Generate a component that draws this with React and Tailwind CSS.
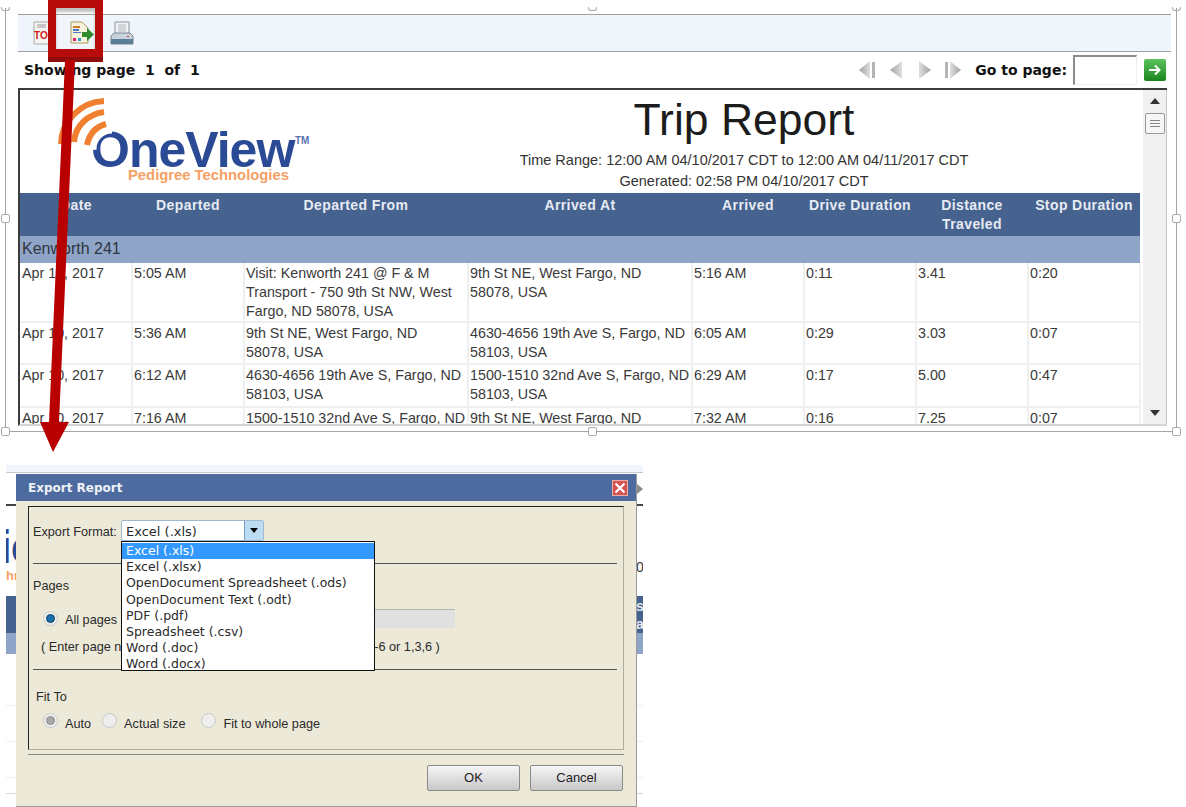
const columns = [
  { label: 'Date', width: 'w-[112px]' },
  { label: 'Departed', width: 'w-[112px]' },
  { label: 'Departed From', width: 'w-[224px]' },
  { label: 'Arrived At', width: 'w-[224px]' },
  { label: 'Arrived', width: 'w-[112px]' },
  { label: 'Drive Duration', width: 'w-[112px]' },
  { label: 'Distance\nTraveled', width: 'w-[112px]' },
  { label: 'Stop Duration', width: 'w-[112px]' },
];

const trips = [
  ['Apr 10, 2017', '5:05 AM', 'Visit: Kenworth 241 @ F & M\nTransport - 750 9th St NW, West\nFargo, ND 58078, USA', '9th St NE, West Fargo, ND\n58078, USA', '5:16 AM', '0:11', '3.41', '0:20'],
  ['Apr 10, 2017', '5:36 AM', '9th St NE, West Fargo, ND\n58078, USA', '4630-4656 19th Ave S, Fargo, ND\n58103, USA', '6:05 AM', '0:29', '3.03', '0:07'],
  ['Apr 10, 2017', '6:12 AM', '4630-4656 19th Ave S, Fargo, ND\n58103, USA', '1500-1510 32nd Ave S, Fargo, ND\n58103, USA', '6:29 AM', '0:17', '5.00', '0:47'],
  ['Apr 10, 2017', '7:16 AM', '1500-1510 32nd Ave S, Fargo, ND', '9th St NE, West Fargo, ND', '7:32 AM', '0:16', '7.25', '0:07'],
];

const formats = [
  'Excel (.xls)',
  'Excel (.xlsx)',
  'OpenDocument Spreadsheet (.ods)',
  'OpenDocument Text (.odt)',
  'PDF (.pdf)',
  'Spreadsheet (.csv)',
  'Word (.doc)',
  'Word (.docx)',
];

const Handle = ({ className }) => (
  <div className={`absolute w-[9px] h-[9px] bg-white border border-[#aaaaaa] rounded-[2px] ${className}`} />
);

// the top handles are cropped by the edge of the picture, only the lower half shows
const TopHandle = ({ className }) => (
  <div className={`absolute w-[9px] h-[4px] border-x border-b border-[#aaaaaa] rounded-b-[3px] ${className}`} />
);

const PdfIcon = () => (
  <svg width="24" height="24" viewBox="0 0 24 24">
    <path d="M1 1h15v22H1z" fill="#f4f4f0" stroke="#a8a8a8" />
    <path d="M4 4h9M4 6h9" stroke="#999" />
    <text x="1" y="18" fontSize="10" fontWeight="bold" fill="#d02020" fontFamily="Liberation Sans">TOO</text>
  </svg>
);

const ExportIcon = () => (
  <svg width="24" height="24" viewBox="0 0 24 24">
    <path d="M1 1h11l6 6v15H1z" fill="#f6f2dc" stroke="#a89a60" />
    <path d="M3 5h7v2H3z" fill="#d07a30" />
    <path d="M3 8h6v2H3zM3 11h8v1H3z" fill="#4a78c8" />
    <path d="M3 17h3v3H3z" fill="#e02080" />
    <path d="M8 17h3v3H8z" fill="#30a0d0" />
    <path d="M12 11h5V7l7 6.500-7 6.500v-4h-5z" fill="#2e8b2e" />
  </svg>
);

const PrinterIcon = () => (
  <svg width="24" height="24" viewBox="0 0 24 24">
    <path d="M5 1h14v13H5z" fill="#f0f2f4" stroke="#8a949e" />
    <path d="M8 4h8M8 6h8M8 8h8M8 10h8" stroke="#b0b8c0" />
    <path d="M1 15l3-3h16l3 3v8H1z" fill="#c8d2dc" stroke="#75858f" />
    <path d="M1 18h22v5H1z" fill="#5b7e98" />
    <path d="M17 15h2v1h-2z" fill="#d03030" />
  </svg>
);

const NavIcon = ({ dir, bar }) => (
  <svg width="20" height="20" viewBox="0 0 20 20" className={dir === 'right' ? '-scale-x-100' : ''}>
    <defs>
      <linearGradient id={`nav-${dir}-${bar}`} x1="0" x2="1" y1="0" y2="0">
        <stop offset="0" stopColor="#a0a0a0" />
        <stop offset="1" stopColor="#e0e0e0" />
      </linearGradient>
    </defs>
    <path d={bar ? 'M2 10l11-9v18z' : 'M3 10l12-9v18z'} fill={`url(#nav-${dir}-${bar})`} />
    {bar && <path d="M15 2h3v16h-3z" fill="#b4b4b4" />}
  </svg>
);

const Radio = ({ kind }) => (
  <span className="flex items-center justify-center w-[15px] h-[15px] rounded-full border border-[#c8c8c8] bg-[#eeeeee] shrink-0">
    {kind === 'blue' && <span className="block w-[9px] h-[9px] rounded-full bg-[#1c6ea8] border border-[#0d3f66]" />}
    {kind === 'gray' && <span className="block w-[9px] h-[9px] rounded-full bg-[#a8a8a8] border border-[#8c8c8c]" />}
  </span>
);

const Logo = () => (
  <div className="relative w-[250px] h-[86px]">
    <span className="absolute left-[33px] top-[22px] text-[50px] leading-[60px] font-bold tracking-[-1px] text-[#2a4a96]">OneView</span>
    <span className="absolute left-[237px] top-[37px] text-[10px] leading-[12px] font-bold text-[#5a76b0]">TM</span>
    <svg className="absolute left-0 top-0" width="60" height="60" viewBox="0 0 60 60">
      <path d="M33 52A21 21 0 0 1 54 30" fill="none" stroke="#ffffff" strokeWidth="11" />
      <path d="M3 46C3 24 22 4 46 3" fill="none" stroke="#f08030" strokeWidth="6" />
      <path d="M16 44C17 28 30 16 46 14" fill="none" stroke="#f08030" strokeWidth="6" />
      <path d="M29 47C31 37 37 29 48 26" fill="none" stroke="#f08030" strokeWidth="6" />
    </svg>
    <span className="absolute left-[70px] top-[68px] text-[14.800px] leading-[18px] font-bold text-[#f5a064]">Pedigree Technologies</span>
  </div>
);

const ReportTable = () => (
  <table className="table-fixed border-collapse w-[1120px] text-[14.300px] leading-[19px] text-[#3a3a3a]">
    <thead>
      <tr className="h-[43px] bg-[#46628f]">
        {columns.map((col) => (
          <th key={col.label} className={`${col.width} align-top pt-[3px] font-bold text-center text-[14px] text-[#e6ebf3] tracking-[0.4px] whitespace-pre-line`}>
            {col.label}
          </th>
        ))}
      </tr>
    </thead>
    <tbody>
      <tr className="h-[27px] bg-[#8fa5c8]">
        <td colSpan={8} className="pl-[2px] pb-[2px] text-[16px] text-[#2f3640]">Kenworth 241</td>
      </tr>
      {trips.map((trip, i) => (
        <tr key={i} className={i === 2 ? 'h-[43px]' : 'h-[42px]'}>
          {trip.map((cell, j) => (
            <td key={j} className={`align-top pt-[1px] border-r-2 border-b-2 border-[#efefef] whitespace-pre ${j === 0 ? 'pl-[2px]' : 'pl-[1px]'}`}>{cell}</td>
          ))}
        </tr>
      ))}
    </tbody>
  </table>
);

const Scrollbar = () => (
  <div className="w-[24px] ml-[2px] bg-[#f0f0f0] border-r border-[#c8c8c8] flex flex-col items-center pt-[8px]">
    <div className="w-0 h-0 border-x-[5px] border-x-transparent border-b-[6px] border-b-[#333333]" />
    <div className="mt-[9px] w-[20px] h-[21px] bg-[#f6f6f6] border border-[#9a9a9a] rounded-[2px] flex flex-col items-center justify-center gap-[2px]">
      <span className="block w-[10px] h-[1px] bg-[#888888]" />
      <span className="block w-[10px] h-[1px] bg-[#888888]" />
      <span className="block w-[10px] h-[1px] bg-[#888888]" />
    </div>
    <div className="mt-auto mb-[8px] w-0 h-0 border-x-[5px] border-x-transparent border-t-[6px] border-t-[#333333]" />
  </div>
);

const ExportDialog = () => (
  <div className="absolute left-[10px] top-[9px] w-[621px] h-[333px] bg-[#ece9d8] border-r border-b border-[#9a9a9a] font-['Liberation_Sans',sans-serif] text-[#2a2a2a]">
    <div className="h-[27px] bg-[#4d6b9f] flex items-center justify-between pl-[12px] pr-[8px]">
      <span className="font-['DejaVu_Sans',sans-serif] font-bold text-[12px] text-[#eef2f8]">Export Report</span>
      <span className="flex items-center justify-center w-[16px] h-[16px] bg-[#d9534f] border border-[#e8b0a8]">
        <svg width="12" height="12" viewBox="0 0 12 12">
          <path d="M1.500 1.500l9 9M10.500 1.500l-9 9" stroke="#ffffff" strokeWidth="2.200" />
        </svg>
      </span>
    </div>

    <div className="relative ml-[12px] mt-[5px] w-[596px] h-[244px] border border-t-[#222222] border-l-[#222222] border-r-[#b0ad9c] border-b-[#b0ad9c] text-[12.700px]">
      <div className="h-[13px]" />
      <div className="flex items-center h-[21px] pl-[4px]">
        <span className="w-[88px] mt-[4px]">Export Format:</span>
        <div className="relative flex w-[143px] h-[21px] bg-white border border-[#9fb8d0] rounded-[2px]">
          <span className="flex-1 pl-[4px] font-['DejaVu_Sans',sans-serif] text-[13px] leading-[21px]">Excel (.xls)</span>
          <span className="flex items-center justify-center w-[19px] bg-[#bcdcf4] border-l border-[#7a9cc0]">
            <span className="block w-0 h-0 border-x-[4px] border-x-transparent border-t-[5px] border-t-black" />
          </span>
          <div className="absolute left-[-1px] top-[20px] w-[254px] h-[130px] pt-[1px] bg-white border border-[#111111] overflow-hidden font-['DejaVu_Sans',sans-serif] text-[12.500px] leading-[16.200px] z-10">
            {formats.map((name, i) => (
              <div key={name} className={`pl-[4px] h-[16.200px] ${i === 0 ? 'bg-[#3399ff] text-white' : ''}`}>{name}</div>
            ))}
          </div>
        </div>
      </div>
      <div className="h-[22px]" />
      <div className="ml-[4px] mr-[6px] border-t border-[#555555]" />

      <div className="flex items-center h-[42px] pl-[4px] pt-[4px]">Pages</div>
      <div className="flex items-center h-[24px] pl-[14px]">
        <Radio kind="blue" />
        <span className="ml-[7px] mt-[6px]">All pages</span>
        <span className="ml-[30px] w-[308px] h-[19px] bg-[#e0e0e0] border-t border-[#b4b4b4]" />
      </div>
      <div className="flex items-center h-[34px] pl-[12px] pt-[2px]">
        <span>( Enter page numbers and/or page ranges, for example:</span>
        <span className="ml-[13px]">1-6 or 1,3,6 )</span>
      </div>
      <div className="h-[5px]" />
      <div className="ml-[4px] mr-[6px] border-t border-[#555555]" />

      <div className="h-[14px]" />
      <div className="flex items-center h-[24px] pl-[7px] pt-[4px]">Fit To</div>
      <div className="flex items-center h-[24px] pl-[14px]">
        <Radio kind="gray" />
        <span className="ml-[7px] mt-[9px]">Auto</span>
        <span className="ml-[11px]"><Radio /></span>
        <span className="ml-[7px] mt-[9px]">Actual size</span>
        <span className="ml-[16px]"><Radio /></span>
        <span className="ml-[7px] mt-[9px]">Fit to whole page</span>
      </div>
    </div>

    <div className="ml-[12px] mt-[4px] w-[596px] border-t border-[#8a8a80]" />
    <div className="flex justify-end gap-[10px] w-[607px] mt-[10px] text-[13px]">
      <button className="w-[93px] h-[26px] border border-[#8a8a8a] rounded-[2px] bg-gradient-to-b from-[#f6f6f6] to-[#c8c8c8] text-[#222222]">OK</button>
      <button className="w-[93px] h-[26px] border border-[#8a8a8a] rounded-[2px] bg-gradient-to-b from-[#f6f6f6] to-[#c8c8c8] text-[#222222]">Cancel</button>
    </div>
  </div>
);

// what shows of the report page behind the dialog
const PageBehind = () => (
  <div className="relative w-[637px] h-[342px] overflow-hidden font-['Liberation_Sans',sans-serif]">
    <div className="h-[8px] bg-[#f0f4fb] border-b border-[#c4c8d0]" />
    <div className="flex justify-end h-[33px] border-b-2 border-[#444444] items-center">
      <span className="w-0 h-0 mr-0 border-y-[5px] border-y-transparent border-l-[6px] border-l-[#8a8a8a]" />
    </div>
    <div className="flex justify-between h-[90px] pt-[19px]">
      <div className="w-[10px] overflow-hidden flex flex-col items-start">
        <span className="ml-[-7px] text-[46px] leading-[44px] font-bold text-[#2a4a96] tracking-[-1px]">ie</span>
        <span className="text-[13px] leading-[14px] font-bold text-[#f5a064]">hn</span>
      </div>
      <div className="w-[7px] overflow-hidden pt-[34px] text-[14px] leading-[16px] text-[#3a3a3a]">01</div>
    </div>
    <div className="flex justify-end h-[37px] bg-[#46628f] text-[14px] leading-[18px] font-bold text-[#e6ebf3] pt-[1px]">
      <div className="w-[7px] overflow-hidden">
        <div>s</div>
        <div>a</div>
      </div>
    </div>
    <div className="h-[21px] bg-[#8fa5c8]" />
    <div className="h-[52px] border-b border-[#eeeeee]" />
    <div className="h-[36px] border-b border-[#eeeeee]" />
    <div className="h-[36px] border-b border-[#eeeeee]" />
    <div className="h-[16px] border-b border-[#d8d8d8]" />
    <ExportDialog />
  </div>
);

const App = () => {
  return (
    <div className="relative w-[1186px] h-[807px] overflow-hidden bg-white font-['Liberation_Sans',sans-serif]">
      <div className="relative ml-[5px] mt-[8px] w-[1172px] h-[424px] border-x border-b border-[#a4a4a4] pt-[6px] pl-[12px]">
        <div className="w-[1153px] h-[412px] flex flex-col">
          <div className="h-[38px] bg-[#f0f4fb] border-y border-[#a0a0a0] flex items-center pl-[15px]">
            <PdfIcon />
            <span className="ml-[13px]"><ExportIcon /></span>
            <span className="ml-[16px]"><PrinterIcon /></span>
          </div>

          <div className="h-[36px] flex items-center pl-[6px] pr-[5px] font-['DejaVu_Sans',sans-serif] font-bold text-[14px] text-[#111111]">
            <span className="whitespace-pre">Showing page  1  of  1</span>
            <div className="ml-auto flex items-center">
              <NavIcon dir="left" bar />
              <span className="ml-[10px]"><NavIcon dir="left" /></span>
              <span className="ml-[7px]"><NavIcon dir="right" /></span>
              <span className="ml-[9px]"><NavIcon dir="right" bar /></span>
              <span className="ml-[12px] mr-[6px]">Go to page:</span>
              <span className="block w-[64px] h-[30px] border-t-2 border-l-2 border-[#8c8c8c] border-r border-b border-r-[#eeeeee] border-b-[#eeeeee]" />
              <span className="ml-[7px] flex items-center justify-center w-[22px] h-[22px] rounded-[2px] bg-gradient-to-b from-[#5cc45c] to-[#16851c]">
                <svg width="14" height="14" viewBox="0 0 14 14">
                  <path d="M1 7h10M7 2.500L11.500 7 7 11.500" fill="none" stroke="#ffffff" strokeWidth="2" />
                </svg>
              </span>
            </div>
          </div>

          <div className="flex w-[1149px] h-[338px] border-t-2 border-l-2 border-[#3c3c3c] border-b-2 border-b-[#d4d4d4]">
            <div className="w-[1121px] overflow-hidden">
              <div className="flex h-[103px]">
                <div className="w-[327px] pl-[38px] pt-[8px]">
                  <Logo />
                </div>
                <div className="flex-1 text-center text-[#333333] text-[14.500px] leading-[21px]">
                  <div className="text-[44.500px] leading-[58px] text-[#1c1c1c] mt-[1px] mb-[1px]">Trip Report</div>
                  <div>Time Range: 12:00 AM 04/10/2017 CDT to 12:00 AM 04/11/2017 CDT</div>
                  <div>Generated: 02:58 PM 04/10/2017 CDT</div>
                </div>
              </div>
              <ReportTable />
            </div>
            <Scrollbar />
          </div>
        </div>
      </div>

      <TopHandle className="left-[1px] top-[7px]" />
      <TopHandle className="left-[588px] top-[7px]" />
      <TopHandle className="left-[1172px] top-[7px]" />
      <Handle className="left-[1px] top-[214px]" />
      <Handle className="left-[1172px] top-[214px]" />
      <Handle className="left-[1px] top-[427px]" />
      <Handle className="left-[588px] top-[427px]" />
      <Handle className="left-[1172px] top-[427px]" />

      <div className="ml-[6px] mt-[33px]">
        <PageBehind />
      </div>

      {/* red callout over the export button */}
      <div className="absolute left-[48px] top-0 w-[55px] h-[57px] border-[8px] border-[#b80c0c] shadow-[0_5px_0_#8f0d0d,inset_0_4px_3px_rgba(0,0,0,0.25)]" />
      <svg className="absolute left-0 top-0 pointer-events-none" width="120" height="460" viewBox="0 0 120 460">
        <path d="M65 60h10L59 422h10L53 452 40 422h9z" fill="#b80000" />
      </svg>
    </div>
  );
};

export default App;
